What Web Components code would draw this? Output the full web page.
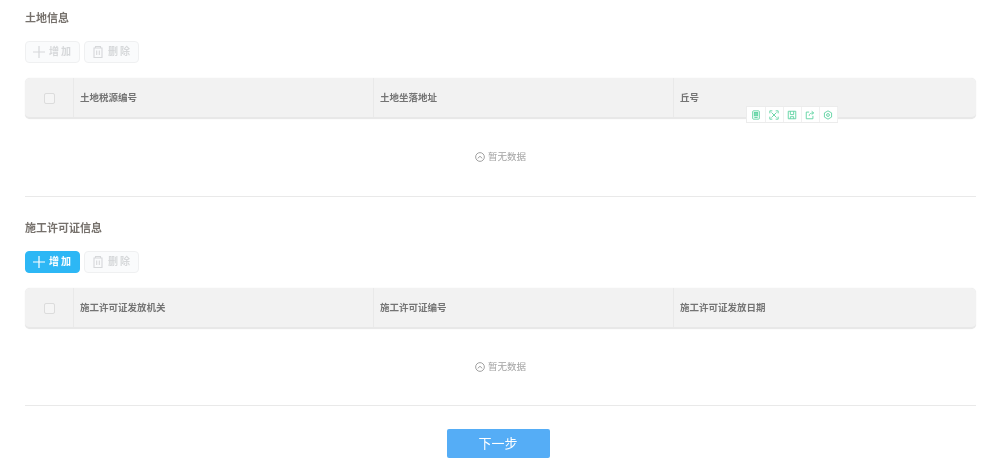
<!DOCTYPE html>
<html lang="zh">
<head>
<meta charset="utf-8">
<title>土地信息</title>
<style>
  html, body { margin: 0; height: 464px; overflow: hidden; background: #fff; }
  body { font-family: "Liberation Sans", "Noto Sans CJK SC", sans-serif; }
</style>
</head>
<body>
<form-page>
  <info-section heading="土地信息" columns="土地税源编号,土地坐落地址,丘号">
    <float-toolbar></float-toolbar>
  </info-section>
  <info-section heading="施工许可证信息" columns="施工许可证发放机关,施工许可证编号,施工许可证发放日期" can-add></info-section>
  <next-button>下一步</next-button>
</form-page>

<script>
const FONT = '"Liberation Sans", "Noto Sans CJK SC", sans-serif';

class FormPage extends HTMLElement {
  connectedCallback() {
    this.attachShadow({ mode: 'open' });
    this.shadowRoot.innerHTML = `
      <style>
        :host { display: block; padding: 0 24px 0 25px; position: relative; font-family: ${FONT}; filter: blur(.3px); }
        .wrap { display: flex; flex-direction: column; }
      </style>
      <div class="wrap"><slot></slot></div>
    `;
  }
}

class ActionButton extends HTMLElement {
  connectedCallback() {
    const icons = {
      plus: '<path d="M7 1v12M1 7h12" stroke="currentColor" stroke-width="1.2" fill="none"/>',
      trash: '<path d="M4.500 3V1.500h5V3M3 3h8v9.500H3zM5.700 5.500v4.500M8.300 5.500v4.500" stroke="currentColor" stroke-width="1.1" fill="none"/>'
    };
    this.attachShadow({ mode: 'open' });
    this.shadowRoot.innerHTML = `
      <style>
        :host { display: block; }
        button {
          box-sizing: border-box; width: 55px; height: 22px; padding: 0;
          display: flex; align-items: center; justify-content: center; gap: 3px;
          border: 1px solid #eff0f1; border-radius: 4px;
          background: #fafbfc; color: #d6d8da;
          font: bold 10px/1 ${FONT}; letter-spacing: 2px;
        }
        :host([primary]) button { background: #2db7f5; border-color: #2db7f5; color: #fff; }
        svg { width: 14px; height: 14px; flex: none; }
      </style>
      <button type="button"><svg viewBox="0 0 14 14">${icons[this.getAttribute('icon')]}</svg><slot></slot></button>
    `;
  }
}

class DataTable extends HTMLElement {
  connectedCallback() {
    const cols = this.getAttribute('columns').split(',');
    this.attachShadow({ mode: 'open' });
    this.shadowRoot.innerHTML = `
      <style>
        :host { display: block; position: relative; }
        .head {
          display: grid; grid-template-columns: 48px 300px 300px 1fr; height: 41px;
          box-sizing: border-box; background: #f2f2f2; border-radius: 5px;
          border-bottom: 2px solid #e8e8e8; box-shadow: 0 0 1px #e0e0e0;
        }
        .cell {
          display: flex; align-items: center; padding-left: 6px; padding-top: 1px;
          border-left: 1px solid #e9e9e9; color: #747474;
          font: bold 9.500px/1 ${FONT};
        }
        .check { border-left: 0; padding: 1px 0 0 1px; justify-content: center; }
        .box { width: 9px; height: 9px; border: 1px solid #dcdcdc; border-radius: 2px; background: #f5f5f5; }
        .empty {
          height: 75px; display: flex; align-items: center; justify-content: center; gap: 3px;
          color: #a3a3a3; font: 9.500px/1 ${FONT};
        }
        .empty svg { width: 10px; height: 10px; }
      </style>
      <div class="head">
        <div class="cell check"><div class="box"></div></div>
        ${cols.map(c => `<div class="cell">${c}</div>`).join('')}
      </div>
      <div class="empty">
        <svg viewBox="0 0 11 11" fill="none" stroke="#979797" stroke-width="1"><circle cx="5.500" cy="5.500" r="4.800"/><path d="M3 7l2.500-2.300L8 7"/></svg>
        <span>暂无数据</span>
      </div>
      <slot></slot>
    `;
  }
}

class InfoSection extends HTMLElement {
  connectedCallback() {
    const add = this.hasAttribute('can-add');
    this.attachShadow({ mode: 'open' });
    this.shadowRoot.innerHTML = `
      <style>
        :host { display: block; box-sizing: border-box; padding-top: 12px; border-bottom: 1px solid #e9e9e9; }
        :host(:first-of-type) { height: 197px; }
        :host(:not(:first-of-type)) { height: 209px; padding-top: 25px; }
        h3 { margin: 0; height: 12px; font: bold 11px/12px ${FONT}; color: #76716c; }
        .bar { display: flex; gap: 4px; margin-top: 17px; margin-bottom: 15px; }
      </style>
      <h3>${this.getAttribute('heading')}</h3>
      <div class="bar">
        <action-button icon="plus" ${add ? 'primary' : ''}>增加</action-button>
        <action-button icon="trash">删除</action-button>
      </div>
      <data-table columns="${this.getAttribute('columns')}"><slot></slot></data-table>
    `;
  }
}

class FloatToolbar extends HTMLElement {
  connectedCallback() {
    const g = [
      '<rect x="2" y="1" width="8" height="10" rx="1"/><rect x="4" y="3" width="4" height="4" fill="#7fdcb4"/><path d="M4 9h4"/>',
      '<path d="M1 4V1h3M8 1h3v3M11 8v3H8M4 11H1V8M3 3l6 6M9 3l-6 6"/>',
      '<path d="M1.500 1.500h9v9h-9zM4 1.500v4h4v-4M4 10.500V8h4v2.500"/>',
      '<path d="M9.500 7v3.500h-8v-8H5M5 7c0-2.500 2-3.500 5-3.500M8 1.500l2.500 2L8 5.500"/>',
      '<path d="M6 1l4.300 2.500v5L6 11 1.700 8.500v-5z"/><circle cx="6" cy="6" r="1.700"/>'
    ];
    this.attachShadow({ mode: 'open' });
    this.shadowRoot.innerHTML = `
      <style>
        :host {
          position: absolute; left: 722px; top: 29px; display: flex;
          background: #fff; box-shadow: 0 0 0 1px #ececec;
        }
        span { display: flex; width: 18px; height: 15px; align-items: center; justify-content: center; box-shadow: 1px 0 0 #f0f0f0; }
        svg { width: 10px; height: 10px; fill: none; stroke: #5fd3a2; stroke-width: 1.100; }
      </style>
      ${g.map(p => `<span><svg viewBox="0 0 12 12">${p}</svg></span>`).join('')}
    `;
  }
}

class NextButton extends HTMLElement {
  connectedCallback() {
    this.attachShadow({ mode: 'open' });
    this.shadowRoot.innerHTML = `
      <style>
        :host { display: flex; justify-content: center; margin: 23px 5px 0 0; }
        button {
          width: 103px; height: 29px; padding: 0; border: 0; border-radius: 2px;
          background: #55adf6; color: #fff; font: 13px/1 ${FONT};
        }
      </style>
      <button type="button"><slot></slot></button>
    `;
  }
}

customElements.define('form-page', FormPage);
customElements.define('action-button', ActionButton);
customElements.define('float-toolbar', FloatToolbar);
customElements.define('data-table', DataTable);
customElements.define('info-section', InfoSection);
customElements.define('next-button', NextButton);
</script>
</body>
</html>
